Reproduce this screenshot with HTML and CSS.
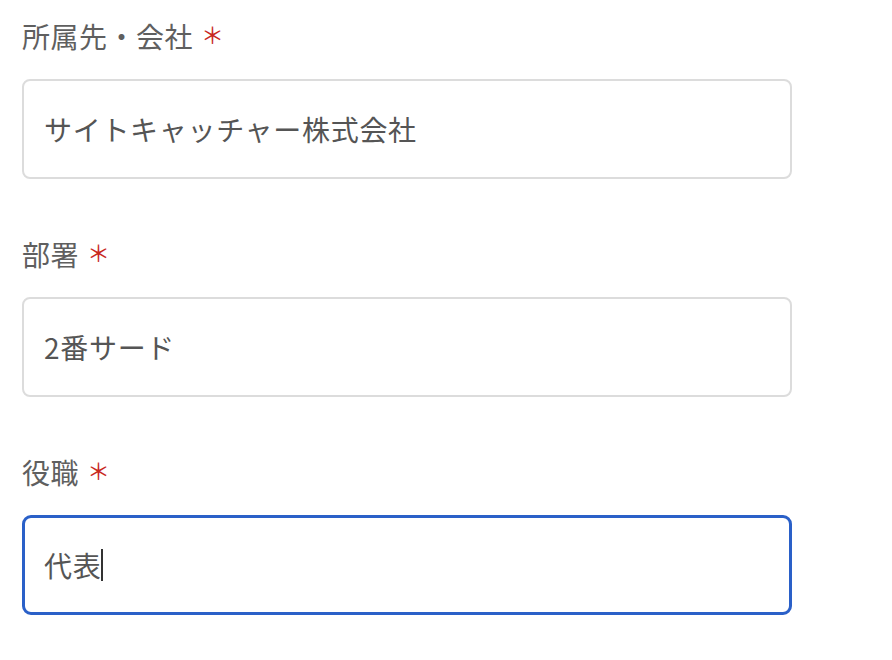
FILE: index.html
```html
<!DOCTYPE html>
<html lang="ja">
<head>
<meta charset="utf-8">
<link rel="stylesheet" href="styles.css">
</head>
<body>
<form class="form">
  <div class="field">
    <label class="label">所属先・会社<span class="req">＊</span></label>
    <div class="input">サイトキャッチャー株式会社</div>
  </div>
  <div class="field">
    <label class="label">部署<span class="req">＊</span></label>
    <div class="input">2番サード</div>
  </div>
  <div class="field">
    <label class="label">役職<span class="req">＊</span></label>
    <div class="input focused">代表<span class="caret"></span></div>
  </div>
</form>
</body>
</html>
```
FILE: styles.css
```css
html, body {
  margin: 0;
  padding: 0;
  background: #fff;
}
body {
  font-family: "Noto Sans CJK JP", "Noto Sans", sans-serif;
  color: #5a5a5a;
}
.form {
  display: flex;
  flex-direction: column;
  gap: 55px;
  padding: 16px 0 0 22px;
}
.field {
  display: flex;
  flex-direction: column;
  gap: 23px;
  width: 770px;
}
.label {
  display: flex;
  align-items: center;
  font-size: 28px;
  line-height: 40px;
  height: 40px;
  letter-spacing: 0.5px;
  color: #5f5f5f;
}
.req {
  color: #c8281e;
  font-size: 23px;
  margin-left: 8px;
  margin-top: -4px;
  letter-spacing: 0;
}
.input {
  box-sizing: border-box;
  height: 100px;
  border: 2px solid #dcdcdc;
  border-radius: 8px;
  padding: 0 20px;
  display: flex;
  align-items: center;
  font-size: 28px;
  letter-spacing: 0.7px;
  color: #555;
}
.input.focused {
  border: 3px solid #2a60c8;
  border-radius: 9px;
  padding: 0 19px;
}
.caret {
  display: inline-block;
  width: 1.5px;
  height: 32px;
  background: #333;
  margin-left: 0;
}
```
